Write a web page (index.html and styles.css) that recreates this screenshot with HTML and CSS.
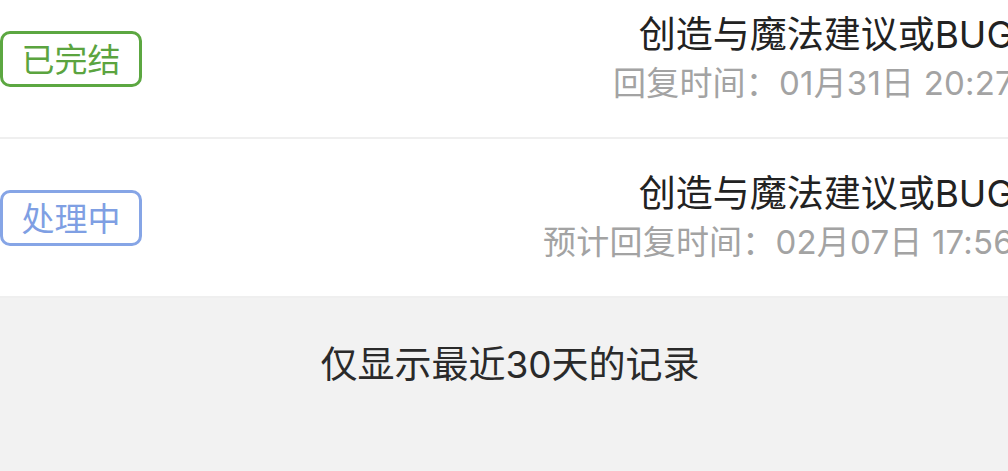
FILE: index.html
```html
<!DOCTYPE html>
<html lang="zh-CN">
<head>
<meta charset="utf-8">
<link rel="stylesheet" href="styles.css">
</head>
<body>
<div class="page">
  <div class="list">
    <div class="row">
      <div class="badge badge-done">已完结</div>
      <div class="info">
        <div class="title">创造与魔法建议或BUG</div>
        <div class="time">回复时间：01月31日 20:27</div>
      </div>
    </div>
    <div class="row">
      <div class="badge badge-doing">处理中</div>
      <div class="info">
        <div class="title">创造与魔法建议或BUG</div>
        <div class="time">预计回复时间：02月07日 17:56</div>
      </div>
    </div>
  </div>
  <div class="footer">仅显示最近30天的记录</div>
</div>
</body>
</html>
```
FILE: styles.css
```css
html, body {
  margin: 0;
  padding: 0;
  background: #f2f2f2;
  overflow: hidden;
}
body {
  width: 1008px;
  height: 471px;
  font-family: "Inter", "Noto Sans CJK SC", sans-serif;
}
.page {
  width: 1014px;
}
.list {
  margin-top: -20px;
  background: #ffffff;
}
.row {
  height: 159px;
  box-sizing: border-box;
  display: flex;
  align-items: center;
  justify-content: space-between;
  border-bottom: 2px solid #efefef;
}
.badge {
  box-sizing: border-box;
  width: 142px;
  height: 56px;
  border: 3px solid;
  border-radius: 10px;
  display: flex;
  align-items: center;
  justify-content: center;
  font-family: "Noto Sans CJK SC", sans-serif;
  font-size: 33px;
  line-height: 1;
}
.badge-done {
  color: #5ba43f;
  border-color: #5ca741;
}
.badge-doing {
  color: #7f9fe3;
  border-color: #86a5e6;
}
.info {
  text-align: right;
  display: flex;
  flex-direction: column;
  gap: 2px;
}
.title {
  font-size: 37px;
  line-height: 46px;
  color: #222222;
  white-space: nowrap;
}
.time {
  font-size: 33px;
  line-height: 46px;
  color: #a3a3a3;
  white-space: nowrap;
  letter-spacing: 0.2px;
}
.footer {
  width: 1020px;
  height: 173px;
  box-sizing: border-box;
  padding-top: 44px;
  text-align: center;
  font-size: 37px;
  line-height: 46px;
  color: #2a2a2a;
}
```
